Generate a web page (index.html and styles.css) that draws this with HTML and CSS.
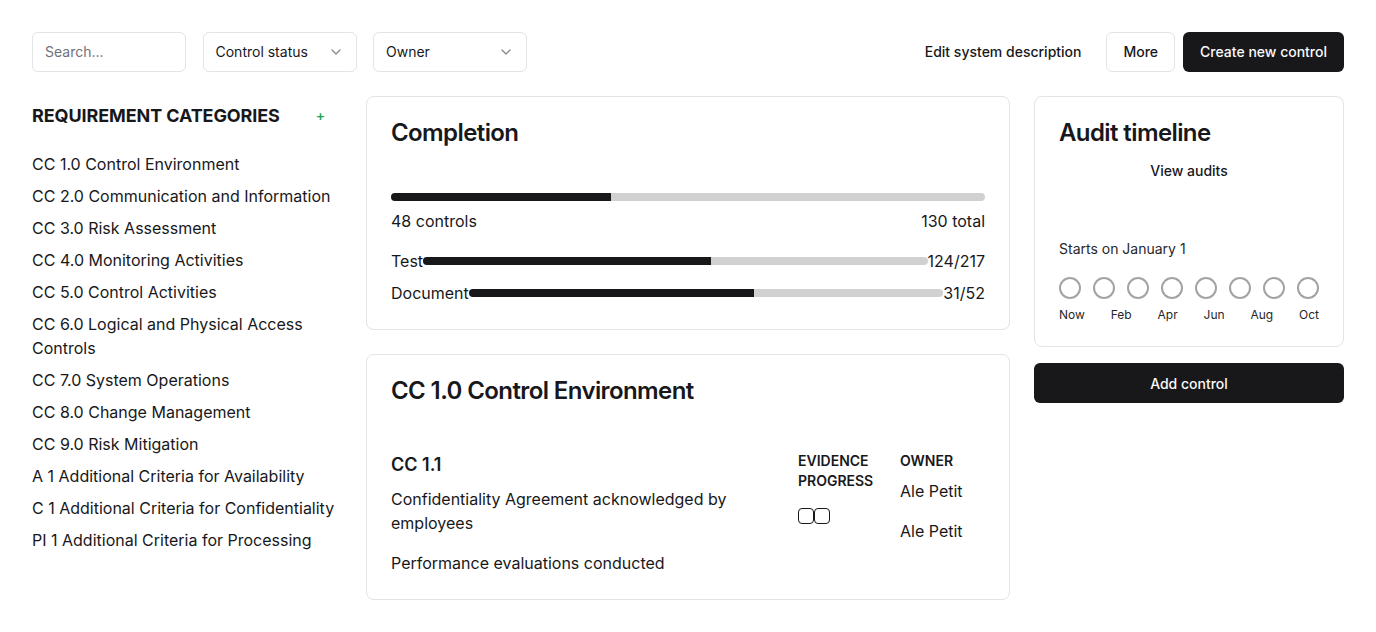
FILE: index.html
```html
<!DOCTYPE html>
<html lang="en">
<head>
<meta charset="utf-8">
<title>Controls</title>
<link rel="stylesheet" href="styles.css">
</head>
<body>
<div class="page">
  <header class="toolbar">
    <div class="filters">
      <input class="input" type="text" placeholder="Search...">
      <button class="select"><span>Control status</span>
        <svg class="chev" viewBox="0 0 24 24" width="16" height="16"><path d="m6 9 6 6 6-6"/></svg>
      </button>
      <button class="select"><span>Owner</span>
        <svg class="chev" viewBox="0 0 24 24" width="16" height="16"><path d="m6 9 6 6 6-6"/></svg>
      </button>
    </div>
    <div class="actions">
      <button class="btn ghost">Edit system description</button>
      <button class="btn outline">More</button>
      <button class="btn primary">Create new control</button>
    </div>
  </header>

  <main class="layout">
    <aside class="sidebar">
      <div class="side-head">
        <h2 class="side-title">REQUIREMENT CATEGORIES</h2>
        <button class="btn ghost add">+</button>
      </div>
      <ul class="cat-list">
        <li>CC 1.0 Control Environment</li>
        <li>CC 2.0 Communication and Information</li>
        <li>CC 3.0 Risk Assessment</li>
        <li>CC 4.0 Monitoring Activities</li>
        <li>CC 5.0 Control Activities</li>
        <li>CC 6.0 Logical and Physical Access Controls</li>
        <li>CC 7.0 System Operations</li>
        <li>CC 8.0 Change Management</li>
        <li>CC 9.0 Risk Mitigation</li>
        <li>A 1 Additional Criteria for Availability</li>
        <li>C 1 Additional Criteria for Confidentiality</li>
        <li>PI 1 Additional Criteria for Processing</li>
      </ul>
    </aside>

    <section class="center">
      <div class="card">
        <div class="card-head">
          <h3 class="card-title">Completion</h3>
        </div>
        <div class="card-body completion">
          <div class="track big"><div class="fill" style="width:37%"></div></div>
          <div class="totals"><span>48 controls</span><span>130 total</span></div>
          <div class="prow first"><span>Test</span><div class="track"><div class="fill" style="width:57%"></div></div><span>124/217</span></div>
          <div class="prow"><span>Document</span><div class="track"><div class="fill" style="width:60%"></div></div><span>31/52</span></div>
        </div>
      </div>

      <div class="card">
        <div class="card-head">
          <h3 class="card-title">CC 1.0 Control Environment</h3>
        </div>
        <div class="card-body controls">
          <div class="col">
            <h4 class="ctl-id">CC 1.1</h4>
            <p class="ctl-desc">Confidentiality Agreement acknowledged by employees</p>
            <p class="ctl-desc gap">Performance evaluations conducted</p>
          </div>
          <div class="col">
            <div class="col-head">EVIDENCE PROGRESS</div>
            <div class="boxes"><span class="box"></span><span class="box"></span></div>
          </div>
          <div class="col">
            <div class="col-head">OWNER</div>
            <p class="owner">Ale Petit</p>
            <p class="owner gap">Ale Petit</p>
          </div>
        </div>
      </div>
    </section>

    <section class="right">
      <div class="card">
        <div class="card-head audit-head">
          <h3 class="card-title">Audit timeline</h3>
          <button class="btn ghost view">View audits</button>
        </div>
        <div class="card-body audit">
          <p class="starts">Starts on January 1</p>
          <div class="dots">
            <span class="dot"></span><span class="dot"></span><span class="dot"></span><span class="dot"></span>
            <span class="dot"></span><span class="dot"></span><span class="dot"></span><span class="dot"></span>
          </div>
          <div class="months">
            <span>Now</span><span>Feb</span><span>Apr</span><span>Jun</span><span>Aug</span><span>Oct</span>
          </div>
        </div>
      </div>
      <button class="btn primary block">Add control</button>
    </section>
  </main>
</div>
</body>
</html>
```

FILE: styles.css
```css
* { box-sizing: border-box; }

html, body {
  margin: 0;
  padding: 0;
  background: #ffffff;
}

body {
  font-family: Inter, "Noto Sans", "Liberation Sans", sans-serif;
  color: #18181b;
  font-size: 16px;
  line-height: 24px;
}

h2, h3, h4, p, ul { margin: 0; padding: 0; }

.page {
  padding: 32px;
}

/* Toolbar */
.toolbar {
  display: flex;
  justify-content: space-between;
  align-items: center;
  height: 40px;
}

.filters {
  display: flex;
  gap: 16.5px;
}

.input,
.select {
  width: 154px;
  height: 40px;
  border: 1px solid #e4e4e7;
  border-radius: 6px;
  background: #fff;
  font-family: inherit;
  font-size: 14px;
  color: #18181b;
  padding: 0 12px 1px;
}

.input::placeholder { color: #71717a; }
.input:focus { outline: none; }

.select {
  display: flex;
  align-items: center;
  justify-content: space-between;
  text-align: left;
}

.chev {
  fill: none;
  stroke: #18181b;
  stroke-width: 2;
  stroke-linecap: round;
  stroke-linejoin: round;
  opacity: 0.5;
}

.actions {
  display: flex;
  gap: 8px;
}

.btn {
  height: 40px;
  padding: 0 16px 1px;
  border-radius: 6px;
  font-family: inherit;
  font-size: 14px;
  font-weight: 500;
  border: 1px solid transparent;
  background: transparent;
  color: #18181b;
  display: inline-flex;
  align-items: center;
  justify-content: center;
}

.btn.outline {
  border-color: #e4e4e7;
  background: #fff;
}

.btn.primary {
  background: #18181b;
  color: #fafafa;
}

.btn.block {
  width: 100%;
  padding-bottom: 0;
}

/* Layout */
.layout {
  display: grid;
  grid-template-columns: 310px 1fr 310px;
  gap: 24px;
  margin-top: 24px;
  align-items: start;
}

/* Sidebar */
.side-head {
  display: flex;
  justify-content: space-between;
  align-items: center;
  height: 40px;
}

.side-title {
  font-size: 18px;
  font-weight: 650;
  line-height: 28px;
  letter-spacing: -0.1px;
}

.btn.add {
  color: #16a34a;
  font-size: 14px;
  font-weight: 500;
  padding: 0 16px 1px;
}

.cat-list {
  list-style: none;
  margin-top: 16px;
  display: flex;
  flex-direction: column;
  gap: 8px;
}

.cat-list li {
  font-size: 16px;
  line-height: 24px;
  color: #18181b;
}

/* Cards */
.center,
.right {
  display: flex;
  flex-direction: column;
}

.center { gap: 24px; }
.right { gap: 16px; }

.card {
  border: 1px solid #e4e4e7;
  border-radius: 8px;
  background: #fff;
}

.card-head {
  padding: 24px;
  display: flex;
  flex-direction: column;
  gap: 6px;
}

.card-title {
  font-size: 24px;
  line-height: 24px;
  font-weight: 600;
  letter-spacing: -0.6px;
}

.card-body {
  padding: 0 24px 24px;
}

/* Completion */
.completion {
  padding-top: 24px;
}

.track {
  height: 8px;
  border-radius: 4px;
  background: #d1d1d1;
  overflow: hidden;
  flex: 1;
}

.fill {
  height: 100%;
  background: #18181b;
}

.totals {
  display: flex;
  justify-content: space-between;
  margin-top: 8px;
}

.prow {
  display: flex;
  align-items: center;
  margin-top: 8px;
}

.prow.first { margin-top: 16px; }

/* Controls table */
.controls {
  display: grid;
  grid-template-columns: 1fr 86px 85px;
  gap: 16px;
  padding-top: 24px;
  padding-bottom: 24px;
}

.ctl-id {
  font-size: 18px;
  line-height: 28px;
  font-weight: 600;
}

.ctl-desc {
  margin-top: 8px;
}

.gap { margin-top: 16px; }

.col-head {
  font-size: 14px;
  line-height: 20px;
  font-weight: 600;
}

.boxes {
  display: flex;
  margin-top: 17px;
}

.box {
  width: 16px;
  height: 16px;
  border: 1.5px solid #18181b;
  border-radius: 4px;
}

.owner {
  margin-top: 8px;
}

.owner.gap { margin-top: 16px; }

/* Audit */
.btn.view {
  width: 100%;
}

.audit {
  padding-top: 24px;
  padding-bottom: 23px;
}

.starts {
  font-size: 14px;
  line-height: 20px;
  color: #27272a;
}

.dots {
  display: flex;
  justify-content: space-between;
  margin-top: 18px;
}

.dot {
  width: 22px;
  height: 22px;
  border-radius: 50%;
  border: 2px solid #a3a3a3;
}

.months {
  display: flex;
  justify-content: space-between;
  margin-top: 8px;
  font-size: 12px;
  line-height: 16px;
  color: #27272a;
}
```
